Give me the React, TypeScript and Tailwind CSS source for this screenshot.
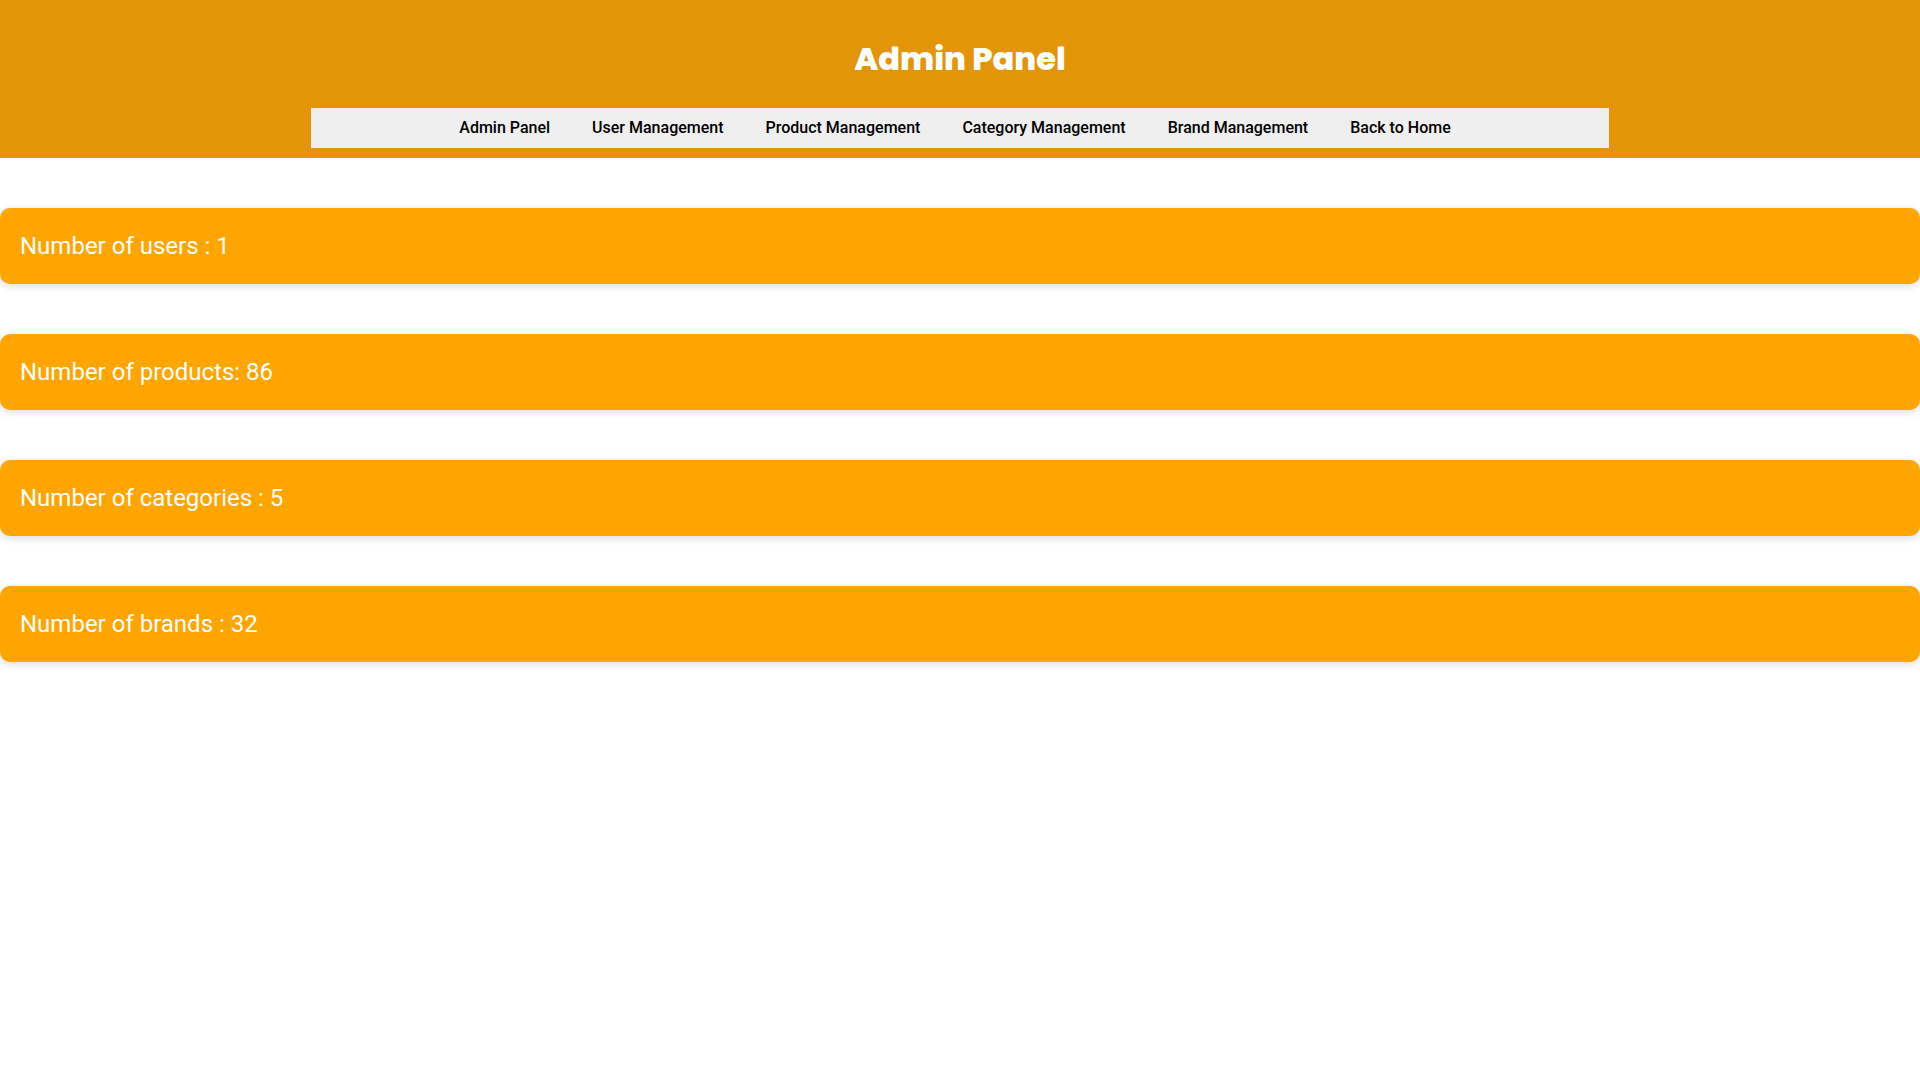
export default function App() {
  const items = [
    "Admin Panel",
    "User Management",
    "Product Management",
    "Category Management",
    "Brand Management",
    "Back to Home",
  ];
  const stats = [
    "Number of users : 1",
    "Number of products: 86",
    "Number of categories : 5",
    "Number of brands : 32",
  ];
  return (
    <div className="min-h-screen bg-white" style={{ fontFamily: "Roboto, 'Liberation Sans', sans-serif" }}>
      <header className="flex flex-col items-center bg-[#e49507] pt-[39px] pb-[10px]">
        <h1
          className="text-[32px] leading-[40px] font-extrabold text-white"
          style={{ fontFamily: "Poppins, Inter, 'Liberation Sans', sans-serif" }}
        >
          Admin Panel
        </h1>
        <nav className="mt-[29px] flex h-[40px] w-[1298px] items-center justify-center bg-[#efefef] pr-[10px]">
          {items.map((t) => (
            <a key={t} className="px-[21px] text-[16px] font-medium text-black">
              {t}
            </a>
          ))}
        </nav>
      </header>
      <main className="flex flex-col gap-[50px] pt-[50px]">
        {stats.map((s) => (
          <div
            key={s}
            className="flex h-[76px] items-center rounded-[10px] bg-[#ffa500] px-5 text-[24px] text-white shadow-[0_2px_8px_rgba(0,0,0,0.15)]"
          >
            {s}
          </div>
        ))}
      </main>
    </div>
  );
}
